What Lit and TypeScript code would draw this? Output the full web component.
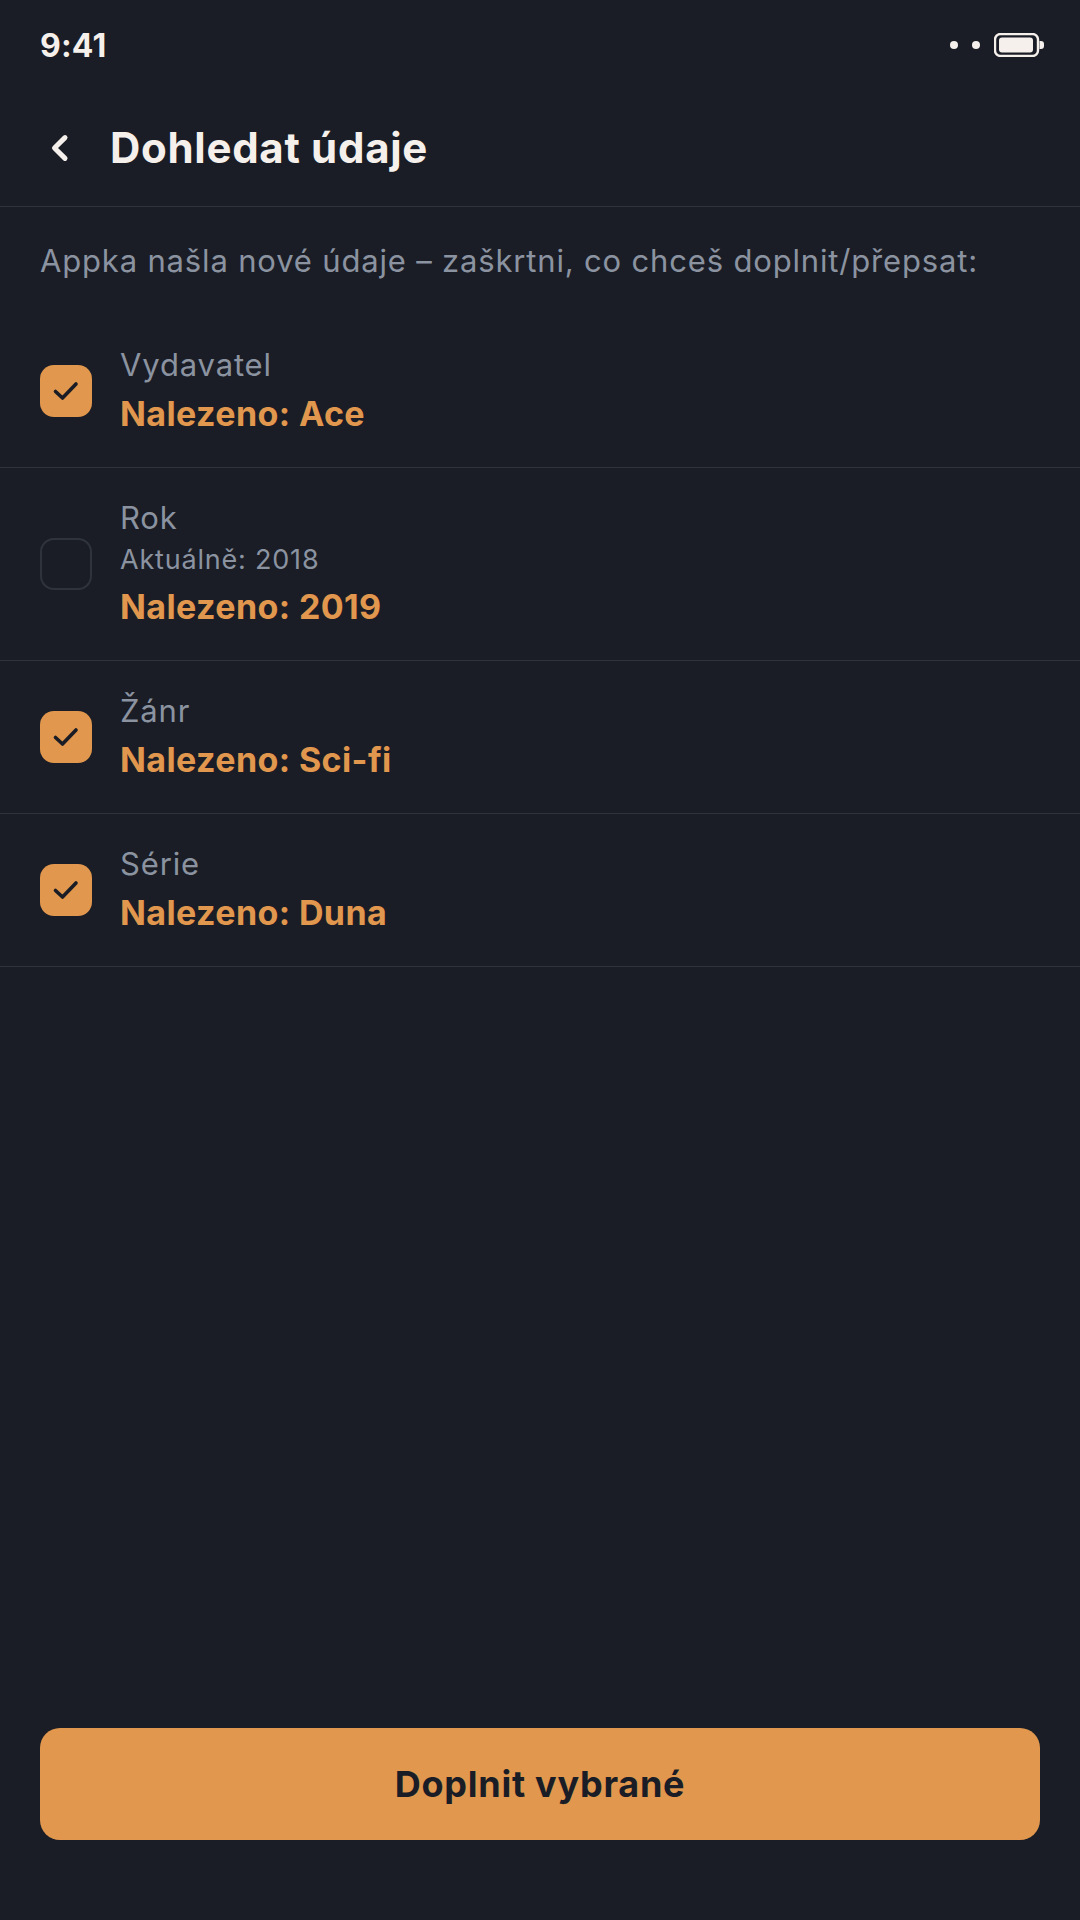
import { LitElement, html, css } from "lit";
import { customElement } from "lit/decorators.js";

type Row = { label: string; current?: string; found: string; checked: boolean };
const rows: Row[] = [
  { label: "Vydavatel", found: "Nalezeno: Ace", checked: true },
  { label: "Rok", current: "Aktuálně: 2018", found: "Nalezeno: 2019", checked: false },
  { label: "Žánr", found: "Nalezeno: Sci-fi", checked: true },
  { label: "Série", found: "Nalezeno: Duna", checked: true },
];

@customElement("app-root")
export class AppRoot extends LitElement {
  static styles = css`
    :host { display: block; width: 1080px; height: 1920px; background: #1a1d25; color: #f5f0eb; font-family: "Inter", "Liberation Sans", sans-serif; }
    .screen { height: 1920px; display: flex; flex-direction: column; box-sizing: border-box; }
    .status { height: 90px; box-sizing: border-box; padding: 0 36px 0 40px; display: flex; align-items: center; justify-content: space-between; }
    .time { font-size: 32px; font-weight: 700; line-height: 32px; padding-top: 2px; letter-spacing: 0.2px; }
    .sys { display: flex; align-items: center; gap: 14px; }
    .dot { width: 8px; height: 8px; border-radius: 50%; background: #f5f0eb; }
    .battery { display: block; }
    .header { height: 117px; box-sizing: border-box; border-bottom: 1px solid #2f333c; padding-left: 40px; display: flex; align-items: center; gap: 30px; }
    .back { display: block; width: 40px; height: 40px; flex: none; }
    h1 { margin: 0; font-size: 42px; font-weight: 700; line-height: 60px; letter-spacing: 0.7px; }
    .intro { margin: 0; height: 108px; box-sizing: border-box; padding: 33px 40px 0; font-size: 31px; line-height: 42px; color: #8b93a1; white-space: nowrap; letter-spacing: 0.83px; }
    .row { display: flex; align-items: center; gap: 28px; padding: 29px 40px 28px; border-bottom: 1px solid #2f333c; }
    .box { width: 52px; height: 52px; margin-bottom: 2px; box-sizing: border-box; border-radius: 14px; flex: none; display: flex; align-items: center; justify-content: center; border: 2px solid #2f333c; }
    .box.on { background: #e1974d; border: none; }
    .text { display: flex; flex-direction: column; }
    .label { font-size: 31px; line-height: 42px; color: #8b93a1; letter-spacing: 0.85px; }
    .current { font-size: 27px; line-height: 40px; margin: 1px 0 -1px; color: #8b93a1; letter-spacing: 0.8px; }
    .found { font-size: 34px; line-height: 50px; margin-top: 3px; font-weight: 700; color: #e1974d; letter-spacing: 0.4px; }
    .spacer { flex: 1; }
    .cta { margin: 0 40px 80px; height: 112px; border: none; border-radius: 20px; background: #e1974d; color: #1a1d25; font: 700 36px/1 "Inter", "Liberation Sans", sans-serif; letter-spacing: 0.75px; display: flex; align-items: center; justify-content: center; padding: 0; }
  `;

  render() {
    return html`<div class="screen">
      <div class="status">
        <span class="time">9:41</span>
        <div class="sys">
          <span class="dot"></span><span class="dot"></span>
          <svg class="battery" width="50" height="24" viewBox="0 0 50 24" aria-hidden="true">
            <rect x="1" y="1" width="43" height="22" rx="5.5" fill="none" stroke="#f5f0eb" stroke-width="2.4"/>
            <rect x="5" y="4.5" width="34" height="15" rx="3" fill="#f5f0eb"/>
            <path d="M45.5 8h1.500a3 3 0 0 1 3 3v2a3 3 0 0 1-3 3h-1.500z" fill="#f5f0eb"/>
          </svg>
        </div>
      </div>
      <div class="header">
        <svg class="back" viewBox="0 0 40 40" aria-hidden="true"><path d="M25 9.600 14.500 20 25 30.400" fill="none" stroke="#f5f0eb" stroke-width="5" stroke-linecap="round" stroke-linejoin="round"/></svg>
        <h1>Dohledat údaje</h1>
      </div>
      <p class="intro">Appka našla nové údaje – zaškrtni, co chceš doplnit/přepsat:</p>
      ${rows.map(
        (r) => html`<div class="row">
          <div class="box ${r.checked ? "on" : ""}">
            ${r.checked
              ? html`<svg width="28" height="24" viewBox="0 0 28 24" aria-hidden="true"><path d="M3.500 12.500 10.500 19 24 5" fill="none" stroke="#1a1d25" stroke-width="3.600" stroke-linecap="round" stroke-linejoin="round"/></svg>`
              : ""}
          </div>
          <div class="text">
            <span class="label">${r.label}</span>
            ${r.current ? html`<span class="current">${r.current}</span>` : ""}
            <span class="found">${r.found}</span>
          </div>
        </div>`
      )}
      <div class="spacer"></div>
      <button class="cta">Doplnit vybrané</button>
    </div>`;
  }
}
